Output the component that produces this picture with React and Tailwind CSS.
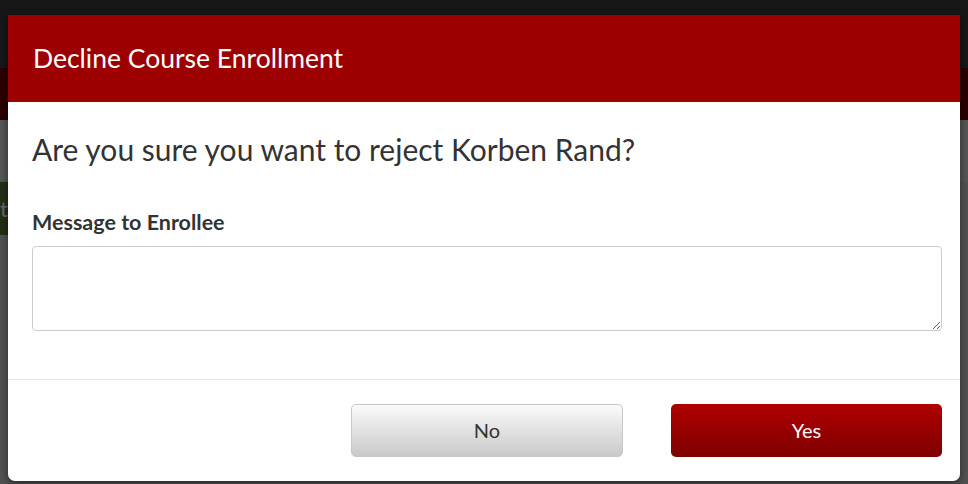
const fontStack = { fontFamily: 'Lato, "Open Sans", sans-serif' };

const BackdropPage = () => (
  <div className="flex h-[484px] w-[968px] flex-col bg-[#5c5c5c]">
    <div className="h-[68px] bg-[#1a1a1a]" />
    <div className="h-[52px] bg-[#300000]" />
    <div className="h-[62px] bg-[#606060]" />
    <div className="flex h-[53px] w-[120px] items-center bg-[#2a3518] pl-0 text-[22px] text-[#777]">to</div>
  </div>
);

const App = () => {
  return (
    <div className="relative h-[484px] w-[968px] overflow-hidden" style={fontStack}>
      <BackdropPage />
      <div className="absolute inset-0 bg-black/10" />

      <div className="absolute left-[8px] top-[15px] flex w-[952px] flex-col overflow-hidden rounded-b-[7px] bg-white shadow-[0_3px_8px_rgba(0,0,0,0.5)]">
        <div className="flex h-[87px] items-center bg-[#9d0000] px-[25px]">
          <h1 className="text-[26.5px] font-normal text-white">Decline Course Enrollment</h1>
        </div>

        <div className="px-[24px] pt-[29px] pb-[48px]">
          <p className="text-[30px] leading-[1.2] text-[#333]">Are you sure you want to reject Korben Rand?</p>
          <label htmlFor="enrollee-message" className="mt-[43px] block text-[21.5px] leading-[1.2] font-bold text-[#333]">
            Message to Enrollee
          </label>
          <textarea
            id="enrollee-message"
            className="mt-[10px] block h-[85px] w-[910px] rounded-[4px] border border-[#cccccc] outline-none"
          />
        </div>

        <div className="flex justify-end gap-[48px] border-t border-[#e5e5e5] px-[18px] pt-[24px] pb-[24px]">
          <button className="h-[53px] w-[272px] rounded-[5px] border border-[#c8c8c8] bg-gradient-to-b from-[#fbfbfb] to-[#c9c9c9] text-[20px] text-[#333]">
            No
          </button>
          <button className="h-[53px] w-[271px] rounded-[5px] bg-gradient-to-b from-[#b00000] to-[#7e0000] text-[20px] text-white">
            Yes
          </button>
        </div>
      </div>
    </div>
  );
};

export default App;
